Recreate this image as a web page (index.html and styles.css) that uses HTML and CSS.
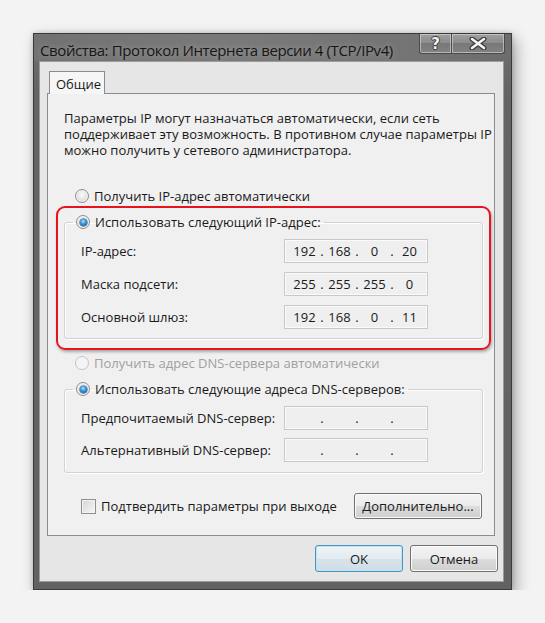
FILE: index.html
```html
<!DOCTYPE html>
<html lang="ru">
<head>
<meta charset="utf-8">
<title>Свойства: Протокол Интернета версии 4 (TCP/IPv4)</title>
<link rel="stylesheet" href="styles.css">
</head>
<body>
<div class="window">
  <div class="titlebar">
    <div class="title">Свойства: Протокол Интернета версии 4 (TCP/IPv4)</div>
    <div class="caption-buttons">
      <div class="cap-btn help">?</div>
      <div class="cap-btn close">
        <svg width="18" height="13" viewBox="0 0 18 13">
          <path d="M3 2 L15 11 M15 2 L3 11" stroke="#3b3b3b" stroke-width="5" stroke-linecap="round"/>
          <path d="M3 2 L15 11 M15 2 L3 11" stroke="#f4f4f4" stroke-width="2.6" stroke-linecap="round"/>
        </svg>
      </div>
    </div>
  </div>
  <div class="client">
    <div class="tabs"><div class="tab">Общие</div></div>
    <div class="panel">
      <div class="intro">
        <div>Параметры IP могут назначаться автоматически, если сеть</div>
        <div>поддерживает эту возможность. В противном случае параметры IP</div>
        <div>можно получить у сетевого администратора.</div>
      </div>

      <div class="option"><span class="radio"></span>Получить IP-адрес автоматически</div>

      <div class="highlight">
        <fieldset class="group">
          <legend class="option"><span class="radio checked"></span>Использовать следующий IP-адрес:</legend>
          <div class="row">
            <span class="label">IP-адрес:</span>
            <div class="ip"><span>192</span><i>.</i><span>168</span><i>.</i><span>0</span><i>.</i><span>20</span></div>
          </div>
          <div class="row">
            <span class="label">Маска подсети:</span>
            <div class="ip"><span>255</span><i>.</i><span>255</span><i>.</i><span>255</span><i>.</i><span>0</span></div>
          </div>
          <div class="row">
            <span class="label">Основной шлюз:</span>
            <div class="ip"><span>192</span><i>.</i><span>168</span><i>.</i><span>0</span><i>.</i><span>11</span></div>
          </div>
        </fieldset>
      </div>

      <div class="option disabled dns-auto"><span class="radio"></span>Получить адрес DNS-сервера автоматически</div>

      <fieldset class="group dns">
        <legend class="option"><span class="radio checked"></span>Использовать следующие адреса DNS-серверов:</legend>
        <div class="row">
          <span class="label">Предпочитаемый DNS-сервер:</span>
          <div class="ip"><span></span><i>.</i><span></span><i>.</i><span></span><i>.</i><span></span></div>
        </div>
        <div class="row">
          <span class="label">Альтернативный DNS-сервер:</span>
          <div class="ip"><span></span><i>.</i><span></span><i>.</i><span></span><i>.</i><span></span></div>
        </div>
      </fieldset>

      <div class="bottom-row">
        <div class="check-option"><span class="checkbox"></span>Подтвердить параметры при выходе</div>
        <button class="btn advanced">Дополнительно...</button>
      </div>
    </div>
    <div class="dialog-buttons">
      <button class="btn default">OK</button>
      <button class="btn">Отмена</button>
    </div>
  </div>
</div>
</body>
</html>
```

FILE: styles.css
```css
html, body {
  margin: 0;
  padding: 0;
}

body {
  background: #f3f3f3;
  font-family: "Open Sans", "Noto Sans", "DejaVu Sans", sans-serif;
  font-size: 13px;
  color: #1a1a1a;
  padding: 33px 0 0 33px;
}

/* window frame */
.window {
  width: 477px;
  height: 555px;
  border: 1px solid #3a3a3a;
  background: linear-gradient(#707070, #646464 60px, #626262);
  box-shadow: 4px 6px 14px rgba(0, 0, 0, 0.32), 0 0 5px rgba(0, 0, 0, 0.18);
  display: flex;
  flex-direction: column;
}

.titlebar {
  height: 29px;
  display: flex;
  justify-content: space-between;
  align-items: flex-start;
  background: linear-gradient(90deg, #727272, #7a7a7a 40%, #747474 80%, #6c6c6c);
}

.title {
  flex: 1;
  min-width: 0;
  padding: 6px 0 0 6px;
  font-size: 15px;
  letter-spacing: -0.4px;
  color: #161616;
  white-space: nowrap;
  overflow: hidden;
  text-shadow: 0 0 6px rgba(220, 220, 220, 0.5);
}

.caption-buttons {
  flex: none;
  display: flex;
  margin-right: 6px;
}

.cap-btn {
  height: 19px;
  border: 1px solid #4a4a4a;
  border-top: none;
  box-shadow: inset 0 0 0 1px rgba(225, 225, 225, 0.55);
  background: linear-gradient(#a0a0a0, #8a8a8a 50%, #787878 50%, #828282);
  display: flex;
  align-items: center;
  justify-content: center;
}

.cap-btn.help {
  width: 31px;
  border-radius: 0 0 0 3px;
  font: bold 15px "DejaVu Sans", sans-serif;
  color: #efefef;
  text-shadow: 1px 0 0 #3a3a3a, -1px 0 0 #3a3a3a, 0 1px 0 #3a3a3a, 0 -1px 0 #3a3a3a;
}

.cap-btn.close {
  width: 52px;
  border-left: none;
  border-radius: 0 0 3px 0;
}

/* client area */
.client {
  flex: 1;
  margin: 0 7px 7px 5px;
  background: #e6e6e6;
  border: 1px solid #9c9c9c;
  display: flex;
  flex-direction: column;
}

.tabs {
  display: flex;
  padding: 9px 0 0 9px;
  position: relative;
  z-index: 1;
}

.tab {
  width: 56px;
  height: 23px;
  box-sizing: border-box;
  border: 1px solid #8a8c93;
  border-bottom: none;
  background: #f6f6f6;
  padding: 3px 0 0 6px;
  margin-bottom: -1px;
}

.panel {
  margin: 0 8px 0 7px;
  border: 1px solid #8a8c93;
  background: #f0f0f0;
  padding: 16px 11px 16px 16px;
  display: flex;
  flex-direction: column;
}

.intro {
  line-height: 16px;
  white-space: nowrap;
}

.option {
  display: flex;
  align-items: center;
  gap: 5px;
  height: 16px;
  white-space: nowrap;
}

.panel > .option {
  margin: 30px 0 0 11px;
}

.radio {
  width: 12px;
  height: 12px;
  flex: none;
  border-radius: 50%;
  border: 1px solid #8d8e8f;
  background: radial-gradient(circle at 50% 40%, #fbfbfb, #dadada 70%, #cfcfcf);
  box-shadow: inset 0 0 0 1px #f6f6f6;
  display: flex;
  align-items: center;
  justify-content: center;
}

.radio.checked::after {
  content: "";
  width: 7px;
  height: 7px;
  border-radius: 50%;
  background: radial-gradient(circle at 45% 35%, #b5e3ff 0, #3e9ae0 40%, #10558c 90%);
  box-shadow: 0 0 0 0.5px #1b4c72;
}

.option.disabled {
  color: #a0a0a0;
}

.option.disabled .radio {
  border-color: #c4c4c4;
  background: #f4f4f4;
}

/* annotation frame around the static IP block */
.highlight {
  margin: 2px -8px 0;
  border: 2px solid #e6141d;
  border-radius: 9px;
  padding: 6px 6px 9px;
  box-shadow: 1px 2px 3px rgba(0, 0, 0, 0.3);
}

.group {
  margin: 0;
  border: 1px solid #d2d2d2;
  border-radius: 3px;
  box-shadow: inset 1px 1px 0 #ffffff, 1px 1px 0 #ffffff;
  padding: 9px 0 9px 16px;
  min-width: 0;
  display: flex;
  flex-direction: column;
  gap: 9px;
}

.group legend {
  margin-left: -8px;
  padding: 0 3px;
}

.panel > .dns-auto {
  margin-top: 5px;
}

.group.dns {
  margin-top: 10px;
  padding-bottom: 10px;
  gap: 8px;
}

.row {
  display: grid;
  grid-template-columns: 203px 144px;
  align-items: center;
}

.ip {
  height: 24px;
  box-sizing: border-box;
  border: 1px solid #c8c8c8;
  background: #efefef;
  box-shadow: inset 0 0 0 1px #fafafa;
  padding-left: 5px;
  display: grid;
  grid-template-columns: 29px 6px 29px 6px 29px 6px 29px;
  align-items: center;
  line-height: 22px;
}

.ip span {
  text-align: center;
}

.ip i {
  font-style: normal;
  text-align: center;
}

.bottom-row {
  margin-top: 20px;
  display: flex;
  justify-content: space-between;
  align-items: center;
}

.check-option {
  display: flex;
  align-items: center;
  gap: 5px;
  margin-left: 17px;
  white-space: nowrap;
}

.checkbox {
  width: 13px;
  height: 13px;
  border: 1px solid #8e8f8f;
  background: linear-gradient(135deg, #d6d6d6, #f6f6f6);
  box-shadow: inset 0 0 0 1px #f2f2f2;
}

.btn {
  font-family: inherit;
  font-size: 13px;
  color: #1a1a1a;
  height: 27px;
  border: 1px solid #707070;
  border-radius: 3px;
  background: linear-gradient(#f3f3f3, #ebebeb 50%, #dddddd 50%, #cfcfcf);
  box-shadow: inset 0 0 0 1px #fbfbfb;
  padding: 0;
}

.btn.advanced {
  width: 128px;
  height: 26px;
  margin-right: 1px;
}

.dialog-buttons {
  margin-top: 9px;
  padding: 0 5px 9px 0;
  display: flex;
  justify-content: flex-end;
  gap: 7px;
}

.dialog-buttons .btn {
  width: 88px;
}

.btn.default {
  border-color: #4a95c0;
  background: linear-gradient(#eef3f6, #e3ebf0 50%, #d8e3ea 50%, #d0dde6);
  box-shadow: inset 0 0 0 1px #bfe3f5;
}
```
